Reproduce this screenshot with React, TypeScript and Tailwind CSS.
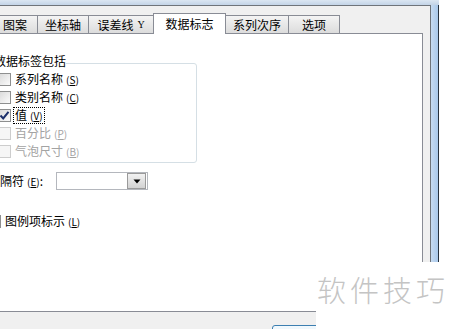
import React from "react";

const tabs = [
  { label: "图案", w: "w-[46px]" },
  { label: "坐标轴", w: "w-[52px]" },
  { label: "误差线", suffix: "Y", w: "w-[66px]" },
  { label: "数据标志", w: "w-[73px]", active: true },
  { label: "系列次序", w: "w-[64px]" },
  { label: "选项", w: "w-[52px]" },
];

function Tab({ label, suffix, w, active }: { label: string; suffix?: string; w: string; active?: boolean }) {
  if (active) {
    return (
      <div className={`relative z-10 -mb-px -ml-px flex h-[21px] items-center justify-center border border-b-0 border-[#898c95] bg-white pb-px ${w}`}>
        {label}
      </div>
    );
  }
  return (
    <div className={`-ml-px flex h-[18px] items-center justify-center border border-b-0 border-[#898c95] bg-gradient-to-b from-[#f4f4f4] to-[#dcdcdc] ${w}`}>
      {label}
      {suffix && <span className="ml-[4px] font-['Liberation_Serif',serif] text-[10px]">{suffix}</span>}
    </div>
  );
}

function Box({ checked, disabled }: { checked?: boolean; disabled?: boolean }) {
  if (disabled) {
    return <div className="h-[13px] w-[13px] shrink-0 border border-[#cdcdcd] bg-[#f6f6f6]" />;
  }
  return (
    <div className="flex h-[13px] w-[13px] shrink-0 items-center justify-center border border-[#8e8f8f] bg-gradient-to-br from-[#dadada] to-[#fbfbfb]">
      {checked && (
        <svg width="11" height="11" viewBox="0 0 11 11">
          <path d="M1.5 5.5 L4.2 8.4 L9.5 1.8" fill="none" stroke="#1b2f6b" strokeWidth="2" />
        </svg>
      )}
    </div>
  );
}

function Key({ k }: { k: string }) {
  return (
    <span className="ml-[3px] text-[10px]">
      (<u>{k}</u>)
    </span>
  );
}

function Row({ label, k, checked, disabled, focus }: { label: string; k: string; checked?: boolean; disabled?: boolean; focus?: boolean }) {
  return (
    <div className="flex h-[18px] items-center gap-[2px]">
      <Box checked={checked} disabled={disabled} />
      <span
        className={`border px-px leading-[14px] ${focus ? "border-dotted border-black" : "border-transparent"} ${disabled ? "text-[#a3a3a3]" : ""}`}
      >
        {label}
        <Key k={k} />
      </span>
    </div>
  );
}

export default function App() {
  return (
    <div className="relative h-[329px] w-[450px] overflow-hidden bg-white font-['Noto_Sans_CJK_SC','Noto_Sans',sans-serif] text-[12px] leading-[14px] text-black">
      <div className="flex h-full w-[439px] flex-col">
        <div className="h-[5px] shrink-0 bg-gradient-to-b from-[#dbe6f2] to-[#c3d4e7]" />
        <div className="flex min-h-0 flex-1 overflow-hidden">
          <div className="flex-1 overflow-hidden border-t border-r border-[#6f747a] bg-[#f0f0f0]">
            <div className="ml-[-7px] mt-[7px] flex h-[20px] items-end">
              {tabs.map((t) => (
                <Tab key={t.label} {...t} />
              ))}
            </div>

            <div className="ml-[-20px] h-[279px] w-[443px] border border-[#898c95] bg-white">
              <fieldset className="ml-[9px] mt-[21px] w-[207px] rounded-[3px] border border-[#d5dfe5] pb-[2px] pl-[7px]">
                <legend className="ml-[-4px] pb-[4px] leading-[12px]">数据标签包括</legend>
                <div className="-mt-px">
                  <Row label="系列名称" k="S" />
                  <Row label="类别名称" k="C" />
                  <Row label="值" k="V" checked focus />
                  <Row label="百分比" k="P" disabled />
                  <Row label="气泡尺寸" k="B" disabled />
                </div>
              </fieldset>

              <div className="mt-[9px] flex h-[18px] items-center pl-[7px]">
                <span className="w-[68px] whitespace-nowrap">
                  分隔符
                  <Key k="E" />:
                </span>
                <div className="flex h-[18px] w-[92px] items-center justify-end border border-[#b4b7bd] bg-white pr-px">
                  <div className="flex h-[16px] w-[19px] items-center justify-center border border-[#9a9a9a] bg-gradient-to-b from-[#f2f2f2] to-[#d2d2d2]">
                    <svg width="8" height="5" viewBox="0 0 8 5">
                      <polygon points="0.5,0.5 7.5,0.5 4,4.5" fill="#000" />
                    </svg>
                  </div>
                </div>
              </div>

              <div className="mt-[22px] pl-[7px]">
                <Row label="图例项标示" k="L" />
              </div>
            </div>

            <div className="ml-[272px] mt-[13px] flex h-[23px] w-[75px] justify-center rounded-[3px] border border-[#3c7fb1] bg-gradient-to-b from-[#f2f9fd] to-[#d4ecfb] pt-[4px]">
              确定
            </div>
          </div>
          <div className="w-[8px] shrink-0 border-r border-[#27313d] bg-gradient-to-r from-[#c7dbf1] to-[#a9c8ea]" />
        </div>
      </div>

      <div className="absolute bottom-0 right-0 h-[67px] w-[134px] bg-white pl-[1px] pt-[13px] text-[29px] font-light leading-[28px] tracking-[4px] text-[#c4c4c4]">
        软件技巧
      </div>
    </div>
  );
}
